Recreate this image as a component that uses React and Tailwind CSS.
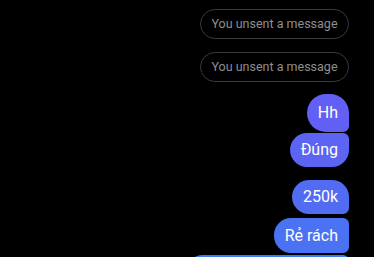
import React from "react";

const messages = [
  { text: "Hh", bg: "bg-[#6260f4]", shape: "rounded-[19px] rounded-br-[6px]", h: "h-[38px]", mt: "mt-[12px]" },
  { text: "Đúng", bg: "bg-[#5b64f3]", shape: "rounded-[17px] rounded-tr-[6px]", h: "h-[34px]", mt: "mt-px" },
  { text: "250k", bg: "bg-[#526bf3]", shape: "rounded-[17px] rounded-br-[6px]", h: "h-[34px]", mt: "mt-[13px]" },
  { text: "Rẻ rách", bg: "bg-[#4a72f3]", shape: "rounded-[17px] rounded-r-[6px]", h: "h-[35px]", mt: "mt-[4px]" },
];

export default function App() {
  return (
    <div
      className="w-[374px] h-[257px] bg-black overflow-hidden flex flex-col items-end pr-[25px] pt-[9px]"
      style={{ fontFamily: "Roboto, 'Noto Sans', sans-serif" }}
    >
      {/* unsent notices */}
      <div className="shrink-0 h-[30px] w-[149px] rounded-full border border-[#3a3a3a] flex items-center justify-center text-[12.5px] text-[#8f8f8f]">
        You unsent a message
      </div>
      <div className="shrink-0 mt-[13px] h-[30px] w-[149px] rounded-full border border-[#3a3a3a] flex items-center justify-center text-[12.5px] text-[#8f8f8f]">
        You unsent a message
      </div>

      {messages.map((m) => (
        <div
          key={m.text}
          className={`${m.mt} ${m.h} ${m.bg} ${m.shape} px-[11px] flex items-center text-[16px] text-white shrink-0`}
        >
          {m.text}
        </div>
      ))}

      {/* next bubble peeking in at the bottom */}
      <div className="mt-[2px] h-[34px] w-[163px] bg-[#3f7af5] rounded-[17px] rounded-tr-[6px] shrink-0" />
    </div>
  );
}
